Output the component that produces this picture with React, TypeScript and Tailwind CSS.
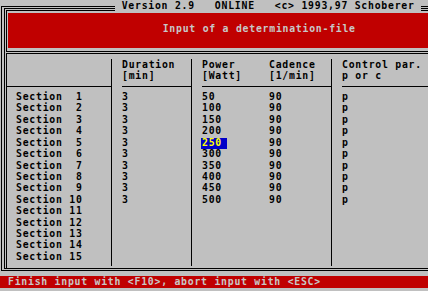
import React from 'react';

const rows = [
  { name: 'Section  1', dur: '3', power: '50', cad: '90', ctl: 'p' },
  { name: 'Section  2', dur: '3', power: '100', cad: '90', ctl: 'p' },
  { name: 'Section  3', dur: '3', power: '150', cad: '90', ctl: 'p' },
  { name: 'Section  4', dur: '3', power: '200', cad: '90', ctl: 'p' },
  { name: 'Section  5', dur: '3', power: '250', cad: '90', ctl: 'p' },
  { name: 'Section  6', dur: '3', power: '300', cad: '90', ctl: 'p' },
  { name: 'Section  7', dur: '3', power: '350', cad: '90', ctl: 'p' },
  { name: 'Section  8', dur: '3', power: '400', cad: '90', ctl: 'p' },
  { name: 'Section  9', dur: '3', power: '450', cad: '90', ctl: 'p' },
  { name: 'Section 10', dur: '3', power: '500', cad: '90', ctl: 'p' },
  { name: 'Section 11', dur: '', power: '', cad: '', ctl: '' },
  { name: 'Section 12', dur: '', power: '', cad: '', ctl: '' },
  { name: 'Section 13', dur: '', power: '', cad: '', ctl: '' },
  { name: 'Section 14', dur: '', power: '', cad: '', ctl: '' },
  { name: 'Section 15', dur: '', power: '', cad: '', ctl: '' },
];

type ColProps = {
  className: string;
  head: [string, string];
  cells: React.ReactNode[];
};

const Column: React.FC<ColProps> = ({ className, head, cells }) => (
  <div className={`flex flex-col ${className}`}>
    <div className="h-[28px] border-b border-black">
      <div>{head[0]}</div>
      <div>{head[1]}</div>
    </div>
    <div className="pt-[4px]">
      {cells.map((c, i) => (
        <div key={i} className="h-[11.43px]">
          {c}
        </div>
      ))}
    </div>
  </div>
);

export default function App() {
  return (
    <div className="relative w-[428px] h-[291px] overflow-hidden bg-[#c0c0c0] text-black font-bold text-[9.8px] leading-[11.43px] tracking-[0.76px] whitespace-pre font-['DejaVu_Sans_Mono','Liberation_Mono',monospace]">
      {/* title over the frame line */}
      <div className="absolute top-0 left-[115px] bg-[#c0c0c0] z-10">
        {' Version 2.9   ONLINE   <c> 1993,97 Schoberer '}
      </div>

      <div className="pt-[6px] pl-[1px]">
        {/* outer double frame */}
        <div className="w-[600px] h-[265px] border-l border-t border-b border-black pl-[2px] pt-[1px] pb-[1px]">
          <div className="h-full flex flex-col border-l border-t border-b border-black pl-[1px] pt-[1px]">
            {/* header panel */}
            <div className="h-[42px] border-l border-t border-b border-black pt-[2px] pl-[1px]">
              <div className="h-[35px] bg-[#c00000] text-[#c8c8c8] pl-[154.7px] pt-[10px]">
                Input of a determination-file
              </div>
            </div>

            {/* table */}
            <div className="mt-[1px] flex-1 flex border-l border-t border-black pt-[5px] pb-[2px]">
              <Column
                className="w-[105px] border-r border-black"
                head={['', '']}
                cells={rows.map((r) => (
                  <div className="pl-[9px]">{r.name}</div>
                ))}
              />
              <Column
                className="w-[80px] border-r border-black pl-[10px]"
                head={['Duration', '[min]']}
                cells={rows.map((r) => r.dur)}
              />
              <Column
                className="w-[77px] pl-[10px]"
                head={['Power', '[Watt]']}
                cells={rows.map((r, i) =>
                  i === 4 ? (
                    <span className="relative inline-block align-top w-[26px] -ml-[1px] pl-[1px] text-[#ffff00]">
                      <span className="absolute left-0 right-0 top-[1.5px] h-[11px] bg-[#0000c8]" />
                      <span className="relative">{r.power}</span>
                    </span>
                  ) : (
                    r.power
                  )
                )}
              />
              <Column
                className="w-[63px] border-r border-black"
                head={['Cadence', '[1/min]']}
                cells={rows.map((r) => r.cad)}
              />
              <Column
                className="flex-1 pl-[10px]"
                head={['Control par.', 'p or c']}
                cells={rows.map((r) => r.ctl)}
              />
            </div>
          </div>
        </div>
      </div>

      {/* status line */}
      <div className="mt-[5px] h-[12px] leading-[12px] bg-[#c00000] text-[#c8c8c8] pl-[8px]">
        Finish input with &lt;F10&gt;, abort input with &lt;ESC&gt;
      </div>
    </div>
  );
}
